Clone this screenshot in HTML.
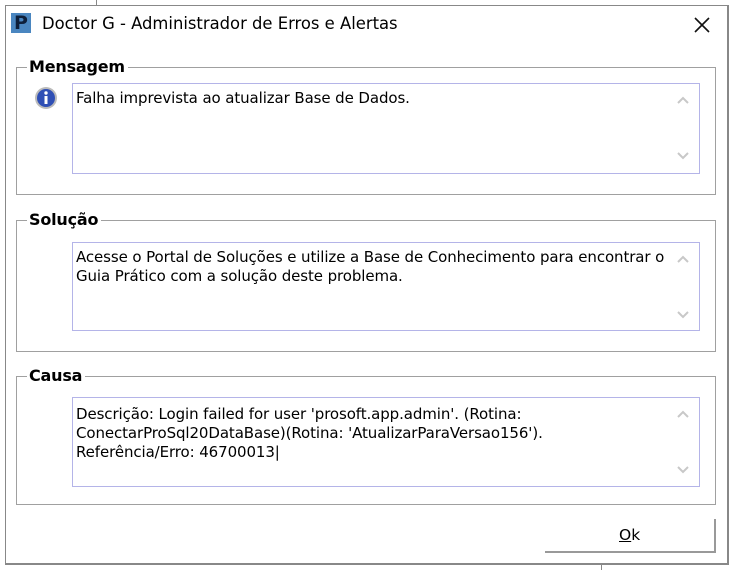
<html><head><style>
body{margin:0;width:733px;height:570px;background:#fff;position:relative;overflow:hidden;font-family:"DejaVu Sans","Liberation Sans",sans-serif;color:#000}
.win{position:absolute;left:5px;top:5px;width:721px;height:557px;border:1px solid #888;border-right:2px solid #888;border-bottom:2px solid #888;background:#fff}
.a{position:absolute}
.fr{position:absolute;left:16px;width:698px;border:1px solid #a0a0a0}
.lb{position:absolute;left:27px;font-weight:bold;font-size:16px;background:#fff;padding:0 3px 0 2px;letter-spacing:-0.2px}
.tb{position:absolute;left:72px;width:628px;border:1px solid #b4b4e8;font-size:15px;line-height:19px;padding:5px 0 0 3px;box-sizing:border-box;letter-spacing:-0.1px}
.ar{position:absolute;right:10px}
</style></head><body>
<div class="a" style="left:96px;top:0;width:1px;height:5px;background:#888"></div>
<div class="a" style="left:601px;top:562px;width:1px;height:8px;background:#888"></div>
<div class="win"></div>
<div class="a" style="left:11px;top:13px;width:20px;height:20px;background:#4a86c0"></div>
<div class="a" style="left:14px;top:12px;color:#0d1f3a;font-weight:bold;font-size:19px">P</div>
<div class="a" style="left:42px;top:14px;font-size:16.4px">Doctor G - Administrador de Erros e Alertas</div>
<svg class="a" style="left:694px;top:17px" width="16" height="16"><path d="M1 1L15 15M15 1L1 15" stroke="#111" stroke-width="1.6"/></svg>

<div class="fr" style="top:67px;height:126px"></div>
<div class="lb" style="top:57px">Mensagem</div>
<svg class="a" style="left:34px;top:86px" width="24" height="24"><circle cx="12" cy="12" r="11" fill="#bbb"/><circle cx="12" cy="12" r="9" fill="#2f4fb5"/><circle cx="12" cy="7" r="1.7" fill="#fff"/><rect x="10.5" y="10" width="3" height="8" fill="#fff"/></svg>
<div class="tb" style="top:83px;height:91px">Falha imprevista ao atualizar Base de Dados.<svg class="ar" style="top:12px" width="12" height="8"><path d="M1 7L6 2L11 7" fill="none" stroke="#c8c8c8" stroke-width="2"/></svg><svg class="ar" style="top:68px" width="12" height="8"><path d="M1 1L6 6L11 1" fill="none" stroke="#c8c8c8" stroke-width="2"/></svg></div>

<div class="fr" style="top:220px;height:130px"></div>
<div class="lb" style="top:210px">Solução</div>
<div class="tb" style="top:242px;height:89px">Acesse o Portal de Soluções e utilize a Base de Conhecimento para encontrar o<br>Guia Prático com a solução deste problema.<svg class="ar" style="top:12px" width="12" height="8"><path d="M1 7L6 2L11 7" fill="none" stroke="#c8c8c8" stroke-width="2"/></svg><svg class="ar" style="top:68px" width="12" height="8"><path d="M1 1L6 6L11 1" fill="none" stroke="#c8c8c8" stroke-width="2"/></svg></div>

<div class="fr" style="top:376px;height:127px"></div>
<div class="lb" style="top:366px">Causa</div>
<div class="tb" style="top:397px;height:90px;padding-top:7px">Descrição: Login failed for user 'prosoft.app.admin'. (Rotina:<br>ConectarProSql20DataBase)(Rotina: 'AtualizarParaVersao156').<br>Referência/Erro: 46700013|<svg class="ar" style="top:12px" width="12" height="8"><path d="M1 7L6 2L11 7" fill="none" stroke="#c8c8c8" stroke-width="2"/></svg><svg class="ar" style="top:68px" width="12" height="8"><path d="M1 1L6 6L11 1" fill="none" stroke="#c8c8c8" stroke-width="2"/></svg></div>

<div class="a" style="left:545px;top:519px;width:169px;height:32px;border-right:2px solid #999;border-bottom:2px solid #999"></div>
<div class="a" style="left:619px;top:526px;font-size:15.5px"><u>O</u>k</div>
</body></html>
